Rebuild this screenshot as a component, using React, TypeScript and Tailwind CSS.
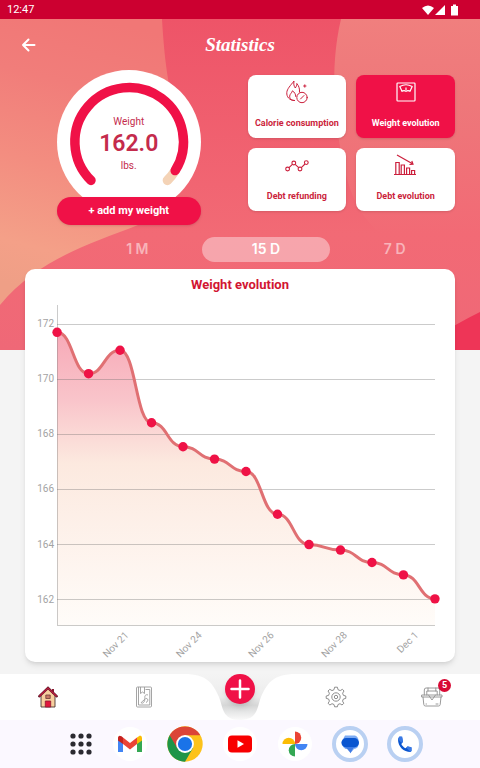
import { useState } from 'react';

const weights = [171.7, 170.2, 171.05, 168.42, 167.55, 167.1, 166.65, 165.1, 164, 163.8, 163.35, 162.9, 162.03];
const ticks = [172, 170, 168, 166, 164, 162];
const days = [
    { label: 'Nov 21', x: 104 },
    { label: 'Nov 24', x: 177 },
    { label: 'Nov 26', x: 249 },
    { label: 'Nov 28', x: 322 },
    { label: 'Dec 1', x: 393 },
];

const LEFT = 32;
const RIGHT = 409;
const BOTTOM = 324;
const toX = (i: number) => LEFT + (i * (RIGHT - LEFT)) / (weights.length - 1);
const toY = (w: number) => 23 + (172 - w) * 27.5;

const linePath = weights
    .map((w, i) => {
        if (i === 0) return `M${toX(0)} ${toY(w)}`;
        const mid = (toX(i - 1) + toX(i)) / 2;
        return `C${mid} ${toY(weights[i - 1])} ${mid} ${toY(w)} ${toX(i)} ${toY(w)}`;
    })
    .join(' ');

const StatusBar = () => (
    <div className="relative flex h-[19px] items-center justify-between bg-[#cc0030] pr-[21px] pl-[7px] text-white">
        <span className="text-[11px] leading-none">12:47</span>
        <svg width="38" height="12" viewBox="0 0 38 12" fill="white">
            <path d="M1 4 Q7 -1 13 4 L7 11 Z" />
            <path d="M24 1 V11 H14 Z" />
            <path d="M30 2 H32 V0.5 H35 V2 H37 V11.5 H30 Z" />
        </svg>
    </div>
);

const HeroBackground = () => (
    <svg className="absolute top-[19px] left-0 h-[331px] w-full" viewBox="0 0 480 331" preserveAspectRatio="none" aria-hidden="true">
        <defs>
            <linearGradient id="hero" x1="0" y1="0" x2="0" y2="1">
                <stop offset="0" stopColor="#ee5468" />
                <stop offset="0.65" stopColor="#f26a75" />
                <stop offset="1" stopColor="#ef6877" />
            </linearGradient>
            <linearGradient id="peach" gradientUnits="userSpaceOnUse" x1="100" y1="0" x2="30" y2="270">
                <stop offset="0" stopColor="#f17776" />
                <stop offset="0.25" stopColor="#f17d7a" />
                <stop offset="0.55" stopColor="#f38d80" />
                <stop offset="0.85" stopColor="#f4a088" />
                <stop offset="1" stopColor="#ef9f86" />
            </linearGradient>
            <linearGradient id="side" x1="0" y1="0" x2="0" y2="1">
                <stop offset="0" stopColor="#f07f7e" />
                <stop offset="0.4" stopColor="#ee777a" />
                <stop offset="1" stopColor="#f26a75" />
            </linearGradient>
        </defs>
        <path fill="url(#hero)" d="M0 0H480V331H0Z" />
        <path fill="url(#side)" d="M341 0C329 50 334 110 347 160C354 185 364 200 380 215H480V0Z" />
        <path fill="url(#peach)" d="M0 0H162C164 35 167 55 170 70C180 130 180 185 138 206C90 225 38 240 0 286Z" />
        <path fill="#ee3557" d="M480 293C450 308 430 322 405 331H480Z" />
    </svg>
);

const Gauge = () => (
    <div className="flex flex-col items-center">
        <div className="grid place-items-center">
            <svg className="col-start-1 row-start-1" width="144" height="144" viewBox="0 0 144 144" fill="none" strokeLinecap="round" strokeWidth="9.5">
                <circle cx="72" cy="72" r="72" fill="white" />
                <path stroke="#f4d3b6" d="M118 101A54.3 54.3 0 0 1 110.4 110.4" />
                <path stroke="#f01147" d="M34 110.4A54.3 54.3 0 1 1 118.2 100.6" />
            </svg>
            <div className="col-start-1 row-start-1 flex flex-col items-center pt-1 text-[#c42b4c]">
                <span className="text-[10px] leading-[14px]">Weight</span>
                <span className="text-[23px] leading-[30px] font-semibold">162.0</span>
                <span className="text-[10px] leading-[14px]">lbs.</span>
            </div>
        </div>
        <button type="button" className="relative -mt-[17px] h-7 w-36 rounded-full bg-[#f01147] text-[11px] font-bold text-white shadow-sm">
            + add my weight
        </button>
    </div>
);

const FlameIcon = () => (
    <svg width="24" height="24" viewBox="0 0 24 24" fill="none" stroke="currentColor" strokeWidth="1" strokeLinecap="round" strokeLinejoin="round">
        <path d="M9.5 20.5C4 20.5 1.5 16.5 1.8 12.5C2 9 5.5 5.5 9 1C8.5 4 8.8 6 10.3 8C11.4 6.5 11.8 5 11.8 3.5C14 6 14.8 9 14.5 12" />
        <path d="M9.5 20.5C6 20.5 4.5 18.5 4.7 16C5 13.8 6.8 13 7.5 10.8C9.5 12.3 10.7 14 10.8 16.5" />
        <circle cx="17" cy="17.5" r="5.2" />
        <path d="M15.5 19L19 15.5" />
        <path d="M19.8 4.8V7.2M18.6 6H21" />
    </svg>
);

const ScaleIcon = () => (
    <svg width="24" height="24" viewBox="0 0 24 24" fill="none" stroke="currentColor" strokeWidth="1.2" strokeLinejoin="round">
        <rect x="3" y="3" width="18" height="18" rx="0.8" />
        <path d="M5.8 6.5Q12 3 18.2 6.5L16 11.3Q14 9.8 12 11.3Q10 9.8 8 11.3Z" />
        <path d="M12 10V7.5" />
    </svg>
);

const DotsIcon = () => (
    <svg width="24" height="24" viewBox="0 0 24 24" fill="none" stroke="currentColor" strokeWidth="1.1">
        <circle cx="2.6" cy="16" r="1.9" />
        <circle cx="8.8" cy="10" r="1.9" />
        <circle cx="15" cy="16" r="1.9" />
        <circle cx="21.3" cy="9.6" r="1.9" />
        <path d="M4 14.6L7.4 11.4M10.1 11.4L13.7 14.7M16.3 14.6L20 11" />
    </svg>
);

const BarsIcon = () => (
    <svg width="24" height="24" viewBox="0 0 24 24" fill="none" stroke="currentColor" strokeWidth="1.2">
        <path d="M0 21.5H22M1.8 21.5V9.5H5.2V21.5M7.2 21.5V12H10.4V21.5M12.6 21.5V15H15.6V21.5M17.6 21.5V17.5H20.6V21.5" />
        <path d="M3 2L18.5 10.8M15.5 11.5L19 11.2L17.8 8" />
    </svg>
);

const cards = [
    { label: 'Calorie consumption', Icon: FlameIcon },
    { label: 'Weight evolution', Icon: ScaleIcon },
    { label: 'Debt refunding', Icon: DotsIcon },
    { label: 'Debt evolution', Icon: BarsIcon },
];

const Chart = () => (
    <svg className="block w-full" viewBox="0 0 429 360" role="img" aria-label="Weight evolution">
        <defs>
            <linearGradient id="area" gradientUnits="userSpaceOnUse" x1="0" y1="23" x2="0" y2="324">
                <stop offset="0" stopColor="#f7a6b5" />
                <stop offset="0.25" stopColor="#f9c4ca" />
                <stop offset="0.46" stopColor="#fce9df" />
                <stop offset="1" stopColor="#fffcf9" />
            </linearGradient>
        </defs>
        <path fill="url(#area)" d={`${linePath} V${BOTTOM} H${LEFT} Z`} />
        <g stroke="#6b6b6b" strokeOpacity="0.35" shapeRendering="crispEdges">
            {ticks.map((t) => (
                <line key={t} x1={LEFT} x2={RIGHT} y1={toY(t)} y2={toY(t)} />
            ))}
            <path fill="none" d={`M${LEFT} 4V${BOTTOM}H${RIGHT}`} />
        </g>
        <path fill="none" stroke="#e07073" strokeWidth="3" d={linePath} />
        {weights.map((w, i) => (
            <circle key={i} cx={toX(i)} cy={toY(w)} r="4.7" fill="#ef1246" />
        ))}
        <g fill="#a3a3a3" fontSize="10">
            {ticks.map((t) => (
                <text key={t} x="29" y={toY(t) + 3} textAnchor="end">{t}</text>
            ))}
            {days.map((d) => (
                <text key={d.label} textAnchor="end" transform={`translate(${d.x} 334) rotate(-45)`}>{d.label}</text>
            ))}
        </g>
    </svg>
);

const HouseIcon = () => (
    <svg width="22" height="22" viewBox="0 0 22 22">
        <path d="M4 9V21H18V9L11 2.5Z" fill="#f7cf9e" stroke="#4b3532" strokeWidth="0.9" />
        <path d="M15 3H17V8H15Z" fill="#8b1830" />
        <path d="M2.2 10.3L11 2L19.8 10.3" fill="none" stroke="#651c2c" strokeWidth="2.4" strokeLinecap="round" />
        <path d="M2.4 10.2L11 2.1L19.6 10.2" fill="none" stroke="#b91c3d" strokeWidth="1.4" />
        <path d="M8.8 9H13.2V12.5H8.8Z" fill="#c77865" stroke="#6d3736" strokeWidth="0.8" />
        <path d="M8.3 15H13.7V21H8.3Z" fill="#e0173d" stroke="#8b1830" strokeWidth="0.8" />
    </svg>
);

const JournalIcon = () => (
    <svg width="22" height="22" viewBox="0 0 22 22" fill="none" stroke="#9b9b9b" strokeWidth="0.9" strokeLinejoin="round">
        <rect x="3.5" y="1" width="15" height="20" rx="1" />
        <path d="M5.5 1V19M5.5 19H16.8V3.5H12.5" />
        <path d="M7.5 1V7.5L9.5 6L11.5 7.500V1" />
        <path d="M15 9C12.5 8 11.3 10 12 12.5C11 15.500 8.5 15 8.200 16.800C10 18 11.8 16 12 12.5M12.8 12.5C15.500 12 15.500 15.500 13 16.5" />
    </svg>
);

const GearIcon = () => (
    <svg width="22" height="22" viewBox="0 0 22 22" fill="none" stroke="#8e8e8e" strokeWidth="1" strokeLinejoin="round">
        <path d="M9.6 1.200H12.400L13 3.700L15.2 4.600L17.400 3.300L19 5L17.6 7.2L18.4 9.400L20.8 10V12.400L18.4 13L17.500 15.100L18.800 17.300L17 19L15 17.700L13 18.5L12.400 20.8H9.6L9 18.5L7 17.700L4.900 19L3.1 17.300L4.400 15.100L3.6 13L1.200 12.400V10L3.6 9.400L4.400 7.2L3 5L4.800 3.300L7 4.600L9 3.700Z" />
        <circle cx="11" cy="11" r="4.2" />
        <circle cx="11" cy="11" r="1.7" />
    </svg>
);

const BasketIcon = () => (
    <svg width="22" height="22" viewBox="0 0 22 22" fill="none" stroke="#8f8f8f" strokeWidth="0.9" strokeLinejoin="round" strokeLinecap="round">
        <path d="M1 9H21V11H1ZM2 11L2.800 18.5Q3 20 4.500 20H17.500Q19 20 19.200 18.5L20 11" />
        <path d="M3.3 9V4Q3.3 2 5 2H17Q18.7 2 18.7 4V9M5.800 9V5H16.2V9" />
        <path d="M7 2V5M14.800 2V5M7.5 9L11 14L14.5 9M15 18H17M5 18H5.5" />
    </svg>
);

const BottomNav = () => (
    <nav className="relative mt-3 h-[46px]">
        <div className="absolute inset-0 flex">
            <div className="flex-1 bg-white" />
            <svg width="112" height="46" viewBox="0 0 112 46" aria-hidden="true">
                <defs>
                    <linearGradient id="notch" x1="0" y1="0" x2="0" y2="1">
                        <stop offset="0" stopColor="#f4f4f4" />
                        <stop offset="0.5" stopColor="#ececec" />
                        <stop offset="0.68" stopColor="#d6d7d7" />
                        <stop offset="1" stopColor="#fafafa" />
                    </linearGradient>
                </defs>
                <path fill="white" d="M0 0H112V46H0Z" />
                <path fill="url(#notch)" d="M0 0C24 0 29 10 35 23C39 33 38 46 56 46C74 46 73 33 77 23C83 10 88 0 112 0Z" />
            </svg>
            <div className="flex-1 bg-white" />
        </div>
        <div className="relative grid h-full grid-cols-5 place-items-center">
            <button type="button" aria-label="Home"><HouseIcon /></button>
            <button type="button" aria-label="Journal"><JournalIcon /></button>
            <button type="button" aria-label="Add" className="mb-4 grid size-[30px] place-items-center rounded-full bg-[#f01147] shadow-md">
                <svg width="20" height="20" viewBox="0 0 20 20" stroke="white" strokeWidth="2.5" strokeLinecap="round">
                    <path d="M10 1.5V18.5M1.5 10H18.5" />
                </svg>
            </button>
            <button type="button" aria-label="Settings"><GearIcon /></button>
            <button type="button" aria-label="Basket" className="relative">
                <BasketIcon />
                <span className="absolute -top-[7px] -right-2 grid size-[13px] place-items-center rounded-full bg-[#d80a35] text-[9px] leading-none font-bold text-white">5</span>
            </button>
        </div>
    </nav>
);

const Dock = () => (
    <div className="relative flex h-12 items-center justify-center gap-[19px] bg-[#fbf8ff] pl-3">
        <button type="button" aria-label="All apps">
            <svg width="24" height="24" viewBox="0 0 24 24" fill="#2b2a31">
                {[4, 12, 20].map((y) => [4, 12, 20].map((x) => <circle key={`${x}-${y}`} cx={x} cy={y} r="2.6" />))}
            </svg>
        </button>
        <button type="button" aria-label="Gmail">
            <svg width="36" height="36" viewBox="0 0 36 36">
                <circle cx="18" cy="18" r="17" fill="white" />
                <path d="M6 12V26H11V16Z" fill="#4285f4" />
                <path d="M25 16V26H30V12Z" fill="#34a853" />
                <path d="M25 11.5L28 9.5Q30 9.5 30 12V14.5L25 18Z" fill="#fbbc04" />
                <path d="M11 11.5L18 17L25 11.5V18L18 23.5L11 18Z" fill="#ea4335" />
                <path d="M6 14.5V11.5Q6.5 8.5 9.5 10.3L11 11.5V18Z" fill="#c5221f" />
            </svg>
        </button>
        <button type="button" aria-label="Chrome">
            <svg width="36" height="36" viewBox="0 0 36 36">
                <circle cx="18" cy="18" r="17.7" fill="#fcc21b" />
                <path d="M18 18L2.7 9.2A17.7 17.7 0 0 0 18 35.7L26 22Z" fill="#1e9548" />
                <path d="M2.7 9.2A17.7 17.7 0 0 1 33.3 9.2H18L10.4 22.4Z" fill="#db4437" />
                <circle cx="18" cy="18" r="8.9" fill="white" />
                <circle cx="18" cy="18" r="7.1" fill="#1a73e8" />
            </svg>
        </button>
        <button type="button" aria-label="YouTube">
            <svg width="36" height="36" viewBox="0 0 36 36">
                <circle cx="18" cy="18" r="17" fill="white" />
                <rect x="6" y="9.5" width="24" height="17" rx="4" fill="#f80000" />
                <path d="M15.5 14.3V21.7L22 18Z" fill="white" />
            </svg>
        </button>
        <button type="button" aria-label="Photos">
            <svg width="36" height="36" viewBox="0 0 36 36">
                <circle cx="18" cy="18" r="17" fill="white" />
                <path d="M18 18V5.5A6.2 6.2 0 0 1 18 18Z" fill="#ea4335" />
                <path d="M18 18H30.5A6.2 6.2 0 0 1 18 18Z" fill="#4285f4" />
                <path d="M18 18V30.5A6.2 6.2 0 0 1 18 18Z" fill="#34a853" />
                <path d="M18 18H5.5A6.2 6.2 0 0 1 18 18Z" fill="#fbbc04" />
            </svg>
        </button>
        <button type="button" aria-label="Messages">
            <svg width="36" height="36" viewBox="0 0 36 36">
                <circle cx="18" cy="18" r="16" fill="white" stroke="#b9d0f2" strokeWidth="4" />
                <path d="M13 9.5H23A5.5 5.5 0 0 1 26.5 14.5V18A5 5 0 0 1 22 23L18 27.5V23H13.5Q9.5 20 9.5 16Z" fill="#7dabf3" />
                <rect x="9.5" y="12" width="17.5" height="9.500" rx="4.7" fill="#0a56d0" />
                <path d="M13.5 21H22L18.500 27Z" fill="#3f7be3" />
            </svg>
        </button>
        <button type="button" aria-label="Phone">
            <svg width="36" height="36" viewBox="0 0 36 36">
                <circle cx="18" cy="18" r="16" fill="white" stroke="#b9d0f2" strokeWidth="4" />
                <path d="M11 13.5C11 20.5 16.5 26 23.5 26L24.5 25V21.5L20.5 20.5L18.5 22.3C16.5 21.3 15 19.5 14.3 18L16 16L15 11H12Z" fill="#0a56d0" />
                <path d="M12.5 10.2L15.2 10.5L16 15.5L14.3 16.8L11 13Z" fill="#3979e4" />
                <path d="M20.5 20.3L24.5 21.3V24.8L23.5 26L19.5 22Z" fill="#3979e4" />
            </svg>
        </button>
    </div>
);

const App = () => {
    const [range, setRange] = useState('15 D');
    const [active, setActive] = useState('Weight evolution');

    return (
        <div className="relative flex min-h-screen flex-col bg-[#f4f4f4] font-['Roboto',sans-serif]">
            <HeroBackground />
            <StatusBar />
            <header className="relative grid h-[51px] grid-cols-[1fr_auto_1fr] items-center px-5 text-white">
                <button type="button" aria-label="Back" className="justify-self-start">
                    <svg width="18" height="18" viewBox="0 0 18 18" fill="none" stroke="white" strokeWidth="2" strokeLinecap="round" strokeLinejoin="round">
                        <path d="M14.5 9H3M8.5 3.5L3 9L8.5 14.5" />
                    </svg>
                </button>
                <h1 className="font-['Liberation_Serif',serif] text-[19px] leading-none font-bold italic">Statistics</h1>
            </header>

            <main className="relative flex flex-1 flex-col px-[25px]">
                <section className="grid grid-cols-2 gap-[15px]">
                    <Gauge />
                    <div className="grid grid-cols-2 content-start gap-[10px] pt-[5px]">
                        {cards.map(({ label, Icon }) => (
                            <button
                                key={label}
                                type="button"
                                onClick={() => setActive(label)}
                                className={`flex h-[63px] flex-col items-center justify-between rounded-lg pt-[5px] pb-[9px] shadow-sm ${active === label ? 'bg-[#f01147] text-white' : 'bg-white text-[#cb1f3c]'}`}
                            >
                                <Icon />
                                <span className="text-[9px] leading-[12px] font-bold whitespace-nowrap">{label}</span>
                            </button>
                        ))}
                    </div>
                </section>

                <div className="mt-3 -mr-1 ml-12 grid grid-cols-3 font-['Inter',sans-serif] text-[14px] font-semibold">
                    {['1 M', '15 D', '7 D'].map((r) => (
                        <button
                            key={r}
                            type="button"
                            onClick={() => setRange(r)}
                            className={`h-[25px] rounded-full pb-[2px] ${range === r ? 'bg-white/40 text-white' : 'text-white/50'}`}
                        >
                            {r}
                        </button>
                    ))}
                </div>

                <section className="mt-[7px] rounded-[10px] bg-white pt-2 shadow-md">
                    <h2 className="pb-2 text-center text-[13px] leading-4 font-bold text-[#d21532]">Weight evolution</h2>
                    <Chart />
                </section>
            </main>

            <BottomNav />
            <Dock />
        </div>
    );
};

export default App;
